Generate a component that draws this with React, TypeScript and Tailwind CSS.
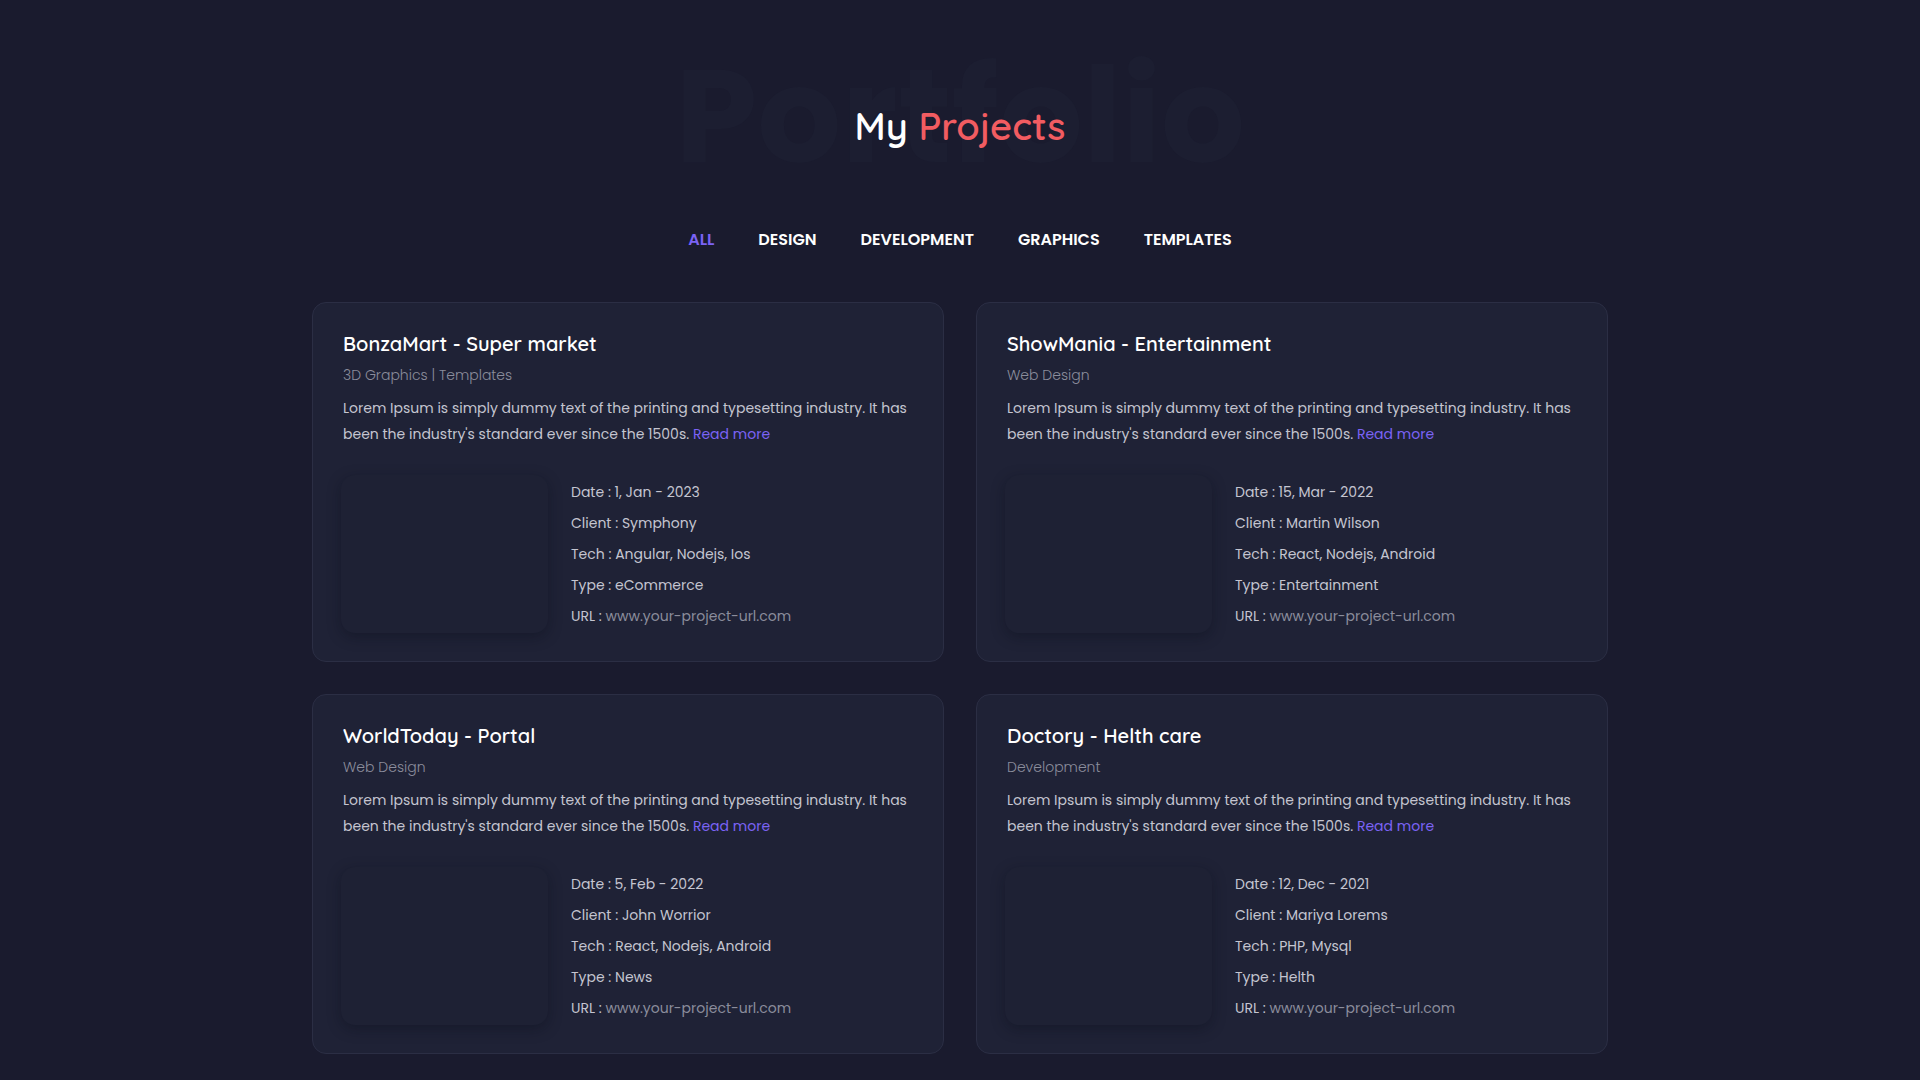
import React, { useState } from "react";

interface Project {
  title: string;
  category: string;
  date: string;
  client: string;
  tech: string;
  type: string;
}

const projects: Project[] = [
  {
    title: "BonzaMart - Super market",
    category: "3D Graphics | Templates",
    date: "1, Jan - 2023",
    client: "Symphony",
    tech: "Angular, Nodejs, Ios",
    type: "eCommerce",
  },
  {
    title: "ShowMania - Entertainment",
    category: "Web Design",
    date: "15, Mar - 2022",
    client: "Martin Wilson",
    tech: "React, Nodejs, Android",
    type: "Entertainment",
  },
  {
    title: "WorldToday - Portal",
    category: "Web Design",
    date: "5, Feb - 2022",
    client: "John Worrior",
    tech: "React, Nodejs, Android",
    type: "News",
  },
  {
    title: "Doctory - Helth care",
    category: "Development",
    date: "12, Dec - 2021",
    client: "Mariya Lorems",
    tech: "PHP, Mysql",
    type: "Helth",
  },
];

const tabs = ["ALL", "DESIGN", "DEVELOPMENT", "GRAPHICS", "TEMPLATES"];

const headingFont = { fontFamily: "Quicksand, 'Open Sans', sans-serif" };

const ProjectCard = ({ project }: { project: Project }) => {
  return (
    <div className="bg-[#1f2236] border border-[#2b2e44] rounded-[14px] px-[30px] pt-[26px] pb-[28px]">
      <h3
        className="text-[20px] font-semibold text-white leading-[30px]"
        style={headingFont}
      >
        {project.title}
      </h3>
      <p className="text-[14px] font-light text-[#8b8d9c] leading-[22px] mt-[5px]">
        {project.category}
      </p>
      <p className="text-[14px] text-[#c4c5d0] leading-[26px] mt-[9px]">
        Lorem Ipsum is simply dummy text of the printing and typesetting
        industry. It has been the industry's standard ever since the 1500s.{" "}
        <a href="#" className="text-[#7b63f5]">
          Read more
        </a>
      </p>

      <div className="flex items-center gap-[23px] mt-[28px]">
        {/* image placeholder */}
        <div className="w-[207px] h-[158px] -ml-[2px] rounded-[14px] bg-[#1e2134] shadow-[0_4px_14px_rgba(10,11,22,0.35)]" />
        <ul className="text-[14px] text-[#c4c5d0] leading-[31px]">
          <li>Date : {project.date}</li>
          <li>Client : {project.client}</li>
          <li>Tech : {project.tech}</li>
          <li>Type : {project.type}</li>
          <li>
            URL : <span className="text-[#8b8d9c]">www.your-project-url.com</span>
          </li>
        </ul>
      </div>
    </div>
  );
};

const App = () => {
  const [active, setActive] = useState("ALL");

  return (
    <div
      className="min-h-screen bg-[#1a1b2e] pt-[76px] pb-10"
      style={{ fontFamily: "Poppins, 'Noto Sans', sans-serif" }}
    >
      {/* Heading */}
      <div className="relative flex items-center justify-center h-[100px]">
        <span className="absolute -top-[26px] text-[132px] font-bold text-[#1c1e31] leading-none select-none">
          Portfolio
        </span>
        <h2
          className="relative text-[38px] font-semibold text-white"
          style={headingFont}
        >
          My <span className="text-[#f25c61]">Projects</span>
        </h2>
      </div>

      {/* Filter tabs */}
      <div className="flex justify-center gap-[44px] mt-[52px]">
        {tabs.map((tab) => (
          <button
            key={tab}
            onClick={() => setActive(tab)}
            className={
              active === tab
                ? "text-[16px] font-semibold leading-[24px] text-[#7b63f5]"
                : "text-[16px] font-semibold leading-[24px] text-white"
            }
          >
            {tab}
          </button>
        ))}
      </div>

      {/* Project grid */}
      <div className="grid grid-cols-2 gap-8 w-[1296px] mx-auto mt-[50px]">
        {projects.map((p) => (
          <ProjectCard key={p.title} project={p} />
        ))}
      </div>
    </div>
  );
};

export default App;
